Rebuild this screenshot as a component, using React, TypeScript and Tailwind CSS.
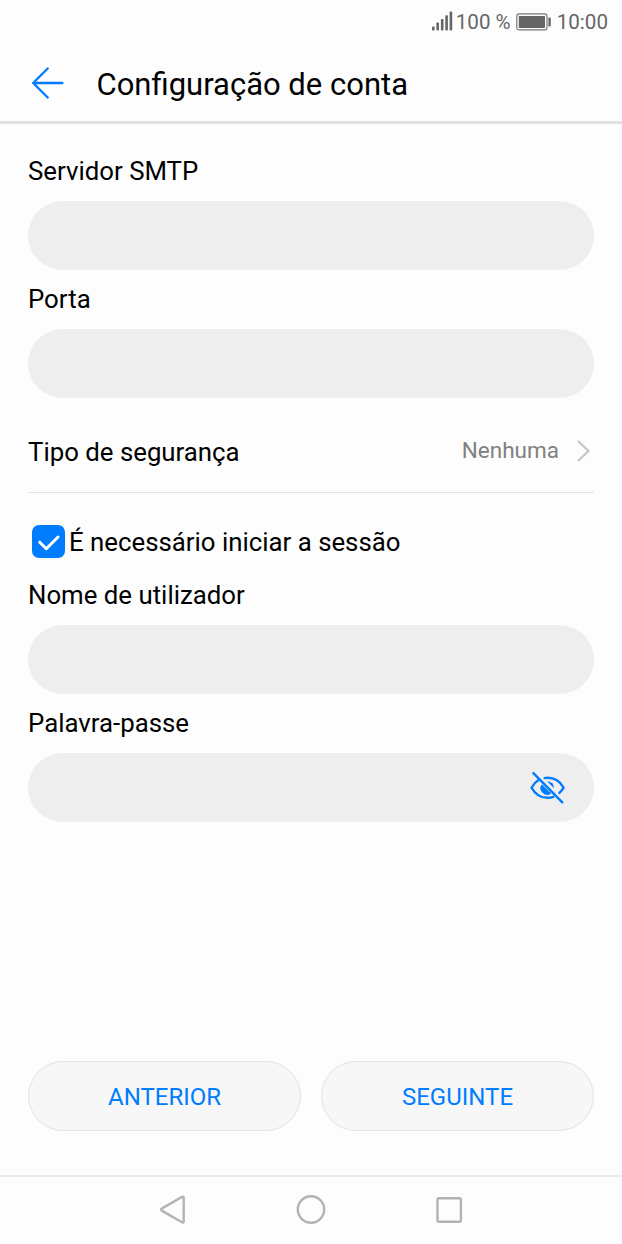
import React from 'react'

type FieldProps = {
  label: string;
  type?: string;
  children?: React.ReactNode;
}

const Field: React.FC<FieldProps> = ({ label, type = 'text', children }) => {
  return (
    <label className='block h-[128.4px]'>
      <span className='block h-12 text-[25.8px] leading-9'>{label}</span>
      <span className='flex items-center h-[69px] rounded-full bg-[#eeeeee] px-7'>
        <input type={type} className='flex-1 min-w-0 bg-transparent outline-none text-[26px]' />
        {children}
      </span>
    </label>
  )
}

const StatusBar = () => {
  return (
    <div className='flex items-center justify-end h-11 pr-[14px] text-[20.6px] text-[#666666]'>
      <svg width='21' height='20' viewBox='0 0 21 20' fill='#666666' className='-mt-[3px]'>
        <rect x='0' y='15.5' width='2.6' height='4' rx='0.8' />
        <rect x='4.4' y='11.5' width='2.6' height='8' rx='0.8' />
        <rect x='8.9' y='8' width='2.6' height='11.5' rx='0.8' />
        <rect x='13.3' y='4.2' width='2.6' height='15.3' rx='0.8' />
        <rect x='17.6' y='0.5' width='2.6' height='19' rx='0.8' />
      </svg>
      <span className='ml-[3px] pt-px'>100 %</span>
      <svg className='ml-[5px]' width='36' height='18' viewBox='0 0 36 18' fill='#666666'>
        <rect x='0.8' y='0.9' width='30.2' height='16' rx='2.5' fill='none' stroke='#777777' strokeWidth='1.2' />
        <rect x='2.8' y='2.9' width='26.2' height='12' rx='0.6' />
        <rect x='32.4' y='4.5' width='2.4' height='9' rx='1' />
      </svg>
      <span className='ml-[5px] pt-px'>10:00</span>
    </div>
  )
}

const Header = () => {
  return (
    <header className='flex items-center h-20 pl-[31px] border-b-[3px] border-[#e0e0e0]'>
      <button aria-label='Voltar'>
        <svg width='34' height='34' viewBox='0 0 34 34' fill='none' stroke='#007dff' strokeWidth='2.4' strokeLinecap='round' strokeLinejoin='round'>
          <path d='M16.7 2.5 2.2 17l14.5 14.5M2.2 17h29.2' />
        </svg>
      </button>
      <h1 className='ml-[31.5px] pt-[5px] text-[31px] leading-10'>Configuração de conta</h1>
    </header>
  )
}

const EyeOffIcon = () => {
  return (
    <svg width='36' height='34' viewBox='0 0 36 34' fill='none' stroke='#007dff' strokeWidth='2.4' strokeLinecap='round'>
      <path d='M9.2 8.6C6 10.6 3.2 13.5 1.6 16.7 4.8 22.6 10.5 26.8 17.6 26.8c2 0 4-.3 5.7-1' />
      <path d='M14.6 7.1c1-.2 2-.3 3-.3 7.1 0 12.8 4 16 9.9-1.1 2-2.5 3.8-4.2 5.2' />
      <path d='M11.8 13.2 21.2 22.5A6.7 6.7 0 0 1 11.8 13.2Z' fill='#007dff' stroke='none' />
      <path d='M17.3 10.5A6.3 6.3 0 0 1 24 17.2Z' fill='#007dff' stroke='none' />
      <path d='M3.4 2.1 32.3 31.3' />
    </svg>
  )
}

const NavBar = () => {
  return (
    <nav className='flex justify-center gap-[106px] h-[69px] pt-[17px] border-t-2 border-[#ebebeb]'>
      <svg width='32' height='32' viewBox='0 0 32 32' fill='none' stroke='#b3b3b3' strokeWidth='2.4' strokeLinejoin='round'>
        <path d='M4.7 14.6Q3.1 15.6 4.7 16.6L25 28.3Q26.7 29.2 26.7 27.3V3.9Q26.7 2 25 2.9Z' />
      </svg>
      <svg width='32' height='32' viewBox='0 0 32 32' fill='none' stroke='#b3b3b3' strokeWidth='2.4'>
        <circle cx='16' cy='15.5' r='13.2' />
      </svg>
      <svg width='32' height='32' viewBox='0 0 32 32' fill='none' stroke='#b3b3b3' strokeWidth='2.4'>
        <rect x='4.5' y='4.3' width='23.4' height='23.4' rx='1.5' />
      </svg>
    </nav>
  )
}

type ButtonProps = {
  title: string;
}

const Button: React.FC<ButtonProps> = ({ title }) => {
  return (
    <button className='flex-1 h-[70px] pt-0.5 rounded-full border-[1.5px] border-[#e2e2e2] bg-[#f7f7f7] text-2xl text-[#007dff]'>
      {title}
    </button>
  )
}

const App = () => {
  return (
    <main className="flex flex-col w-[622px] h-[1244px] overflow-hidden bg-[#fdfdfd] text-black font-['Roboto',sans-serif]">
      <StatusBar />
      <Header />
      <form className='flex flex-col flex-1 px-7 pt-[29px]'>
        <Field label='Servidor SMTP' />
        <Field label='Porta' />

        <div className='flex items-center h-[83px] border-b border-[#e4e4e4]'>
          <span className='flex-1 pt-[3px] text-[25.8px]'>Tipo de segurança</span>
          <span className='pt-px text-[22.5px] text-[#808080]'>Nenhuma</span>
          <svg className='ml-[15px]' width='20' height='24' viewBox='0 0 20 24' fill='none' stroke='#c8c8c8' strokeWidth='2.4'>
            <path d='M4 2 14.5 12 4 22' />
          </svg>
        </div>

        <label className='flex items-center h-[84px] pt-[14px] pl-1 text-[25.8px]'>
          <input type='checkbox' defaultChecked className='sr-only' />
          <span className='flex items-center justify-center w-[33px] h-[33px] rounded-[7px] bg-[#007dff]'>
            <svg width='33' height='33' viewBox='0 0 33 33' fill='none' stroke='#ffffff' strokeWidth='3' strokeLinecap='round' strokeLinejoin='round'>
              <path d='M7.7 17.2 14.3 23.7 26 12' />
            </svg>
          </span>
          <span className='ml-1 pt-0.5'>É necessário iniciar a sessão</span>
        </label>

        <Field label='Nome de utilizador' />
        <Field label='Palavra-passe' type='password'>
          <EyeOffIcon />
        </Field>

        <div className='flex gap-5 mt-auto mb-11'>
          <Button title='ANTERIOR' />
          <Button title='SEGUINTE' />
        </div>
      </form>
      <NavBar />
    </main>
  )
}

export default App
